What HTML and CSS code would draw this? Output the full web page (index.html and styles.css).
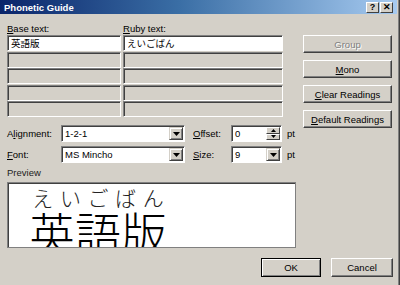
FILE: index.html
```html
<!DOCTYPE html>
<html lang="en">
<head>
    <meta charset="UTF-8">
    <title>Phonetic Guide</title>
    <link rel="stylesheet" href="styles.css">
</head>
<body>
    <div class="dialog">
        <div class="titlebar">
            <span class="title">Phonetic Guide</span>
            <div class="caption-btns">
                <span class="cap-btn">?</span>
                <span class="cap-btn">&#x2715;</span>
            </div>
        </div>

        <div class="content">
            <div class="main">
                <div class="left">
                    <div class="labels">
                        <span class="label-base"><u>B</u>ase text:</span>
                        <span><u>R</u>uby text:</span>
                    </div>

                    <div class="grid">
                        <div class="cell filled">英語版</div>
                        <div class="cell filled">えいごばん</div>
                        <div class="cell"></div><div class="cell"></div>
                        <div class="cell"></div><div class="cell"></div>
                        <div class="cell"></div><div class="cell"></div>
                        <div class="cell"></div><div class="cell"></div>
                    </div>

                    <div class="options">
                        <div class="opt-row">
                            <span class="opt-label">A<u>l</u>ignment:</span>
                            <div class="field combo">
                                <span class="field-text">1-2-1</span>
                                <span class="arrow-btn">
                                    <svg width="7" height="4" viewBox="0 0 7 4"><path d="M0 0h7L3.5 4z" fill="#000"/></svg>
                                </span>
                            </div>
                            <span class="opt-label2"><u>O</u>ffset:</span>
                            <div class="field num">
                                <span class="field-text">0</span>
                                <span class="spin">
                                    <span class="spin-btn"><svg width="5" height="3" viewBox="0 0 5 3"><path d="M0 3h5L2.5 0z" fill="#000"/></svg></span>
                                    <span class="spin-btn"><svg width="5" height="3" viewBox="0 0 5 3"><path d="M0 0h5L2.5 3z" fill="#000"/></svg></span>
                                </span>
                            </div>
                            <span class="unit">pt</span>
                        </div>
                        <div class="opt-row">
                            <span class="opt-label"><u>F</u>ont:</span>
                            <div class="field combo">
                                <span class="field-text">MS Mincho</span>
                                <span class="arrow-btn">
                                    <svg width="7" height="4" viewBox="0 0 7 4"><path d="M0 0h7L3.5 4z" fill="#000"/></svg>
                                </span>
                            </div>
                            <span class="opt-label2"><u>S</u>ize:</span>
                            <div class="field num">
                                <span class="field-text">9</span>
                                <span class="arrow-btn">
                                    <svg width="7" height="4" viewBox="0 0 7 4"><path d="M0 0h7L3.5 4z" fill="#000"/></svg>
                                </span>
                            </div>
                            <span class="unit">pt</span>
                        </div>
                    </div>

                    <div class="preview-label">Preview</div>
                    <div class="preview">
                        <div class="preview-text">
                            <div class="ruby">
                                <span>え</span><span>い</span><span>ご</span><span>ば</span><span>ん</span>
                            </div>
                            <div class="base">英語版</div>
                        </div>
                    </div>
                </div>

                <div class="side">
                    <button class="btn disabled">Group</button>
                    <button class="btn"><u>M</u>ono</button>
                    <button class="btn"><u>C</u>lear Readings</button>
                    <button class="btn"><u>D</u>efault Readings</button>
                </div>
            </div>

            <div class="footer">
                <button class="btn btn-ok">OK</button>
                <button class="btn btn-cancel">Cancel</button>
            </div>
        </div>
    </div>
</body>
</html>
```

FILE: styles.css
```css
* {
    margin: 0;
    padding: 0;
    box-sizing: border-box;
}

body {
    width: 400px;
    height: 285px;
    overflow: hidden;
    background: #d4d0c8;
    font-family: 'Liberation Sans', Arial, sans-serif;
    font-size: 9.5px;
    color: #000;
}

u {
    text-decoration: underline;
    text-underline-offset: 1px;
}

.dialog {
    width: 400px;
    height: 285px;
    background: #d4d0c8;
    border-right: 1px solid #404040;
    box-shadow: inset -1px 0 #808080;
}

/* title bar */
.titlebar {
    height: 14px;
    display: flex;
    align-items: center;
    justify-content: space-between;
    padding: 0 4px 0 4px;
    margin-right: 2px;
    background: linear-gradient(90deg, #0a246a 0%, #3a6ea5 45%, #a6caf0 100%);
}

.title {
    color: #fff;
    font-weight: 700;
    font-size: 9.5px;
}

.caption-btns {
    display: flex;
    gap: 1px;
}

.cap-btn {
    width: 13px;
    height: 11px;
    display: flex;
    align-items: center;
    justify-content: center;
    background: #d4d0c8;
    border: 1px solid;
    border-color: #fff #404040 #404040 #fff;
    font-weight: 700;
    font-size: 9px;
    line-height: 1;
}

/* body */
.content {
    padding: 7px 6px 0 7px;
}

.main {
    display: flex;
}

.left {
    width: 290px;
}

.labels {
    height: 14px;
    display: flex;
    align-items: center;
}

.label-base {
    width: 116px;
}

.grid {
    display: grid;
    grid-template-columns: 114px 160px;
    grid-auto-rows: 16px;
    column-gap: 2px;
    row-gap: 0.5px;
}

.cell {
    border-top: 1px solid #808080;
    border-left: 1px solid #808080;
    border-bottom: 1px solid #fff;
    border-right: 1px solid #fff;
    box-shadow: inset 1px 1px #404040;
    padding: 1px 0 0 3px;
    font-family: 'Noto Sans CJK JP', sans-serif;
    font-size: 9.5px;
    line-height: 13px;
}

.cell.filled {
    background: #fff;
}

.options {
    margin-top: 8px;
    display: flex;
    flex-direction: column;
    gap: 4px;
}

.opt-row {
    display: flex;
    align-items: center;
    height: 17px;
}

.opt-label {
    width: 54px;
}

.opt-label2 {
    width: 38px;
    margin-left: 8px;
}

.field {
    height: 17px;
    display: flex;
    align-items: center;
    justify-content: space-between;
    background: #fff;
    border-top: 1px solid #808080;
    border-left: 1px solid #808080;
    border-bottom: 1px solid #fff;
    border-right: 1px solid #fff;
    box-shadow: inset 1px 1px #404040;
    padding: 1px 1px 1px 3px;
}

.combo {
    width: 124px;
}

.num {
    width: 51px;
}

.arrow-btn {
    width: 14px;
    height: 13px;
    display: flex;
    align-items: center;
    justify-content: center;
    background: #d4d0c8;
    border: 1px solid;
    border-color: #d4d0c8 #404040 #404040 #d4d0c8;
    box-shadow: inset 1px 1px #fff, inset -1px -1px #808080;
}

.spin {
    display: flex;
    flex-direction: column;
}

.spin-btn {
    width: 14px;
    height: 6.5px;
    display: flex;
    align-items: center;
    justify-content: center;
    background: #d4d0c8;
    border: 1px solid;
    border-color: #fff #404040 #404040 #fff;
}

.unit {
    margin-left: 5px;
}

.preview-label {
    height: 19px;
    padding-top: 4px;
    color: #222;
}

.preview {
    width: 289px;
    height: 66px;
    background: #fff;
    border: 1px solid #808080;
    box-shadow: inset 1px 1px #404040;
    overflow: hidden;
    padding: 4px 0 0 21px;
}

.preview-text {
    width: 138px;
    font-family: 'Noto Sans CJK JP', sans-serif;
    font-weight: 300;
}

.ruby {
    display: flex;
    justify-content: space-around;
    font-size: 21px;
    line-height: 21px;
    color: #222;
}

.base {
    font-size: 46px;
    line-height: 46px;
    white-space: nowrap;
}

/* buttons */
.side {
    margin-left: 6px;
    padding-top: 14px;
    width: 89px;
    display: flex;
    flex-direction: column;
    gap: 7px;
}

.btn {
    height: 18px;
    font-family: 'Liberation Sans', Arial, sans-serif;
    font-size: 9.5px;
    color: #000;
    background: #d4d0c8;
    border: 1px solid;
    border-color: #fff #404040 #404040 #fff;
    box-shadow: inset -1px -1px #808080;
}

.btn.disabled {
    color: #808080;
    text-shadow: 1px 1px #fff;
}

.footer {
    margin-top: 10px;
    display: flex;
    justify-content: flex-end;
    gap: 10px;
}

.btn-ok {
    width: 60px;
    height: 19px;
    outline: 1px solid #000;
    outline-offset: -1px;
    border-color: #000;
    box-shadow: inset 1px 1px #fff, inset -1px -1px #808080;
}

.btn-cancel {
    width: 62px;
    height: 19px;
}
```
